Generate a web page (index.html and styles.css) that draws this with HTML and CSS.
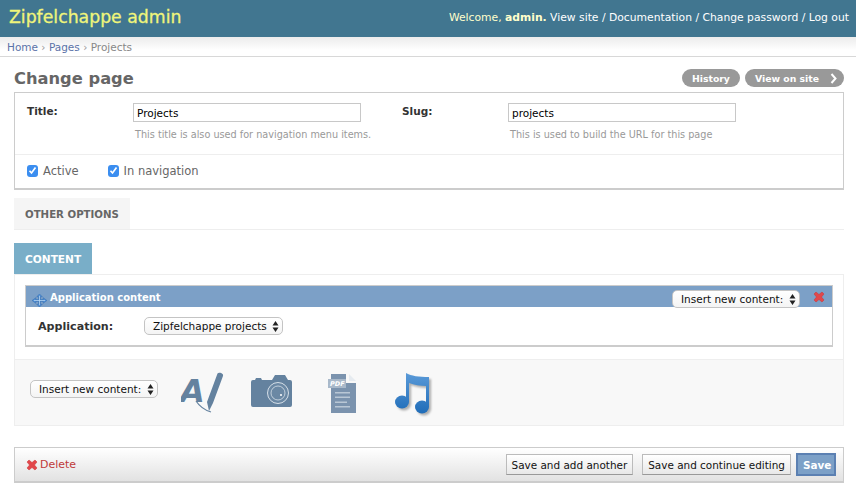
FILE: index.html
```html
<!DOCTYPE html>
<html lang="en">
<head>
  <meta charset="UTF-8">
  <title>Change page | Zipfelchappe admin</title>
  <link rel="stylesheet" href="styles.css">
</head>

<body>

  <header class="topbar">
    <div class="brand">Zipfelchappe admin</div>
    <div class="usertools">
      <span class="welcome">Welcome, <strong>admin.</strong></span>
      <a href="#">View site</a> / <a href="#">Documentation</a> / <a href="#">Change password</a> / <a href="#">Log out</a>
    </div>
  </header>

  <div class="breadcrumbs">
    <a href="#">Home</a> <span class="sep">›</span> <a href="#">Pages</a> <span class="sep">›</span> Projects
  </div>

  <main class="content">
    <div class="title-row">
      <h1>Change page</h1>
      <div class="object-tools">
        <a class="tool" href="#">History</a>
        <a class="tool tool-next" href="#">View on site
          <svg class="chevron" width="7" height="11" viewBox="0 0 7 11"><path d="M1.5 1l4 4.5-4 4.5" fill="none" stroke="#fff" stroke-width="2"/></svg>
        </a>
      </div>
    </div>

    <section class="module">
      <div class="form-row fields">
        <div class="field">
          <label class="field-label">Title:</label>
          <div>
            <input class="text-input" type="text" value="Projects">
            <p class="help">This title is also used for navigation menu items.</p>
          </div>
        </div>
        <div class="field">
          <label class="field-label">Slug:</label>
          <div>
            <input class="text-input" type="text" value="projects">
            <p class="help">This is used to build the URL for this page</p>
          </div>
        </div>
      </div>
      <div class="form-row checks">
        <label class="check">
          <span class="checkbox"><svg width="9" height="9" viewBox="0 0 9 9"><path d="M1.5 4.8l2 2.2 4-5.5" fill="none" stroke="#fff" stroke-width="1.7"/></svg></span>
          Active
        </label>
        <label class="check">
          <span class="checkbox"><svg width="9" height="9" viewBox="0 0 9 9"><path d="M1.5 4.8l2 2.2 4-5.5" fill="none" stroke="#fff" stroke-width="1.7"/></svg></span>
          In navigation
        </label>
      </div>
    </section>

    <div class="tabs tabs-options">
      <a class="tab" href="#">OTHER OPTIONS</a>
    </div>

    <div class="tabs tabs-content">
      <a class="tab tab-active" href="#">CONTENT</a>
    </div>

    <section class="panel">
      <div class="panel-body">
        <div class="item">
          <div class="item-head">
            <svg class="move-icon" width="15" height="13" viewBox="0 0 16 14">
              <path d="M8 0l3 3H9v3h3V4l4 3-4 3V8H9v3h2l-3 3-3-3h2V8H4v2L0 7l4-3v2h3V3H5z" fill="#4f8fd6" stroke="#2f69ad" stroke-width=".5"/>
              <path d="M2 7h12M8 2v10" stroke="#bcd8f2" stroke-width=".8"/>
            </svg>
            <span class="item-title">Application content</span>
            <span class="select select-head">Insert new content:
              <svg class="updown" width="7" height="11" viewBox="0 0 7 11"><path d="M3.500 0l3 4.500H.5zM3.500 11l-3-4.500h6z" fill="#222"/></svg>
            </span>
            <svg class="x-icon x-head" width="12" height="12" viewBox="0 0 12 12"><path d="M3 1l3 2.500L9 1l2 2-2.500 3L11 9l-2 2-3-2.500L3 11 1 9l2.500-3L1 3z" fill="#e2474b" stroke="#c33" stroke-width=".5"/></svg>
          </div>
          <div class="item-row">
            <span class="item-label">Application:</span>
            <span class="select">Zipfelchappe projects
              <svg class="updown" width="7" height="11" viewBox="0 0 7 11"><path d="M3.500 0l3 4.500H.5zM3.500 11l-3-4.500h6z" fill="#222"/></svg>
            </span>
          </div>
        </div>
      </div>

      <div class="insert-bar">
        <span class="select">Insert new content:
          <svg class="updown" width="7" height="11" viewBox="0 0 7 11"><path d="M3.500 0l3 4.500H.5zM3.500 11l-3-4.500h6z" fill="#222"/></svg>
        </span>

        <svg class="tool-icon icon-text" width="44" height="42" viewBox="0 0 44 42">
          <text x="-1" y="30" class="icon-a">A</text>
          <path d="M15 29c4 6 8 9 15 11" fill="none" stroke="#64829f" stroke-width="1.200"/>
          <path d="M36.500 1.500c1-1.200 4-.6 5 .5.800.8.600 1.500.4 2.200L32 31l-4 8-2-9z" fill="#64829f"/>
        </svg>

        <svg class="tool-icon icon-camera" width="41" height="32" viewBox="0 0 41 32">
          <path d="M0 7q0-2 2-2h2l1-2h5l1 2h10l3-5h10l3 5h2q2 0 2 2v23q0 2-2 2H2q-2 0-2-2z" fill="#64829f"/>
          <circle cx="27" cy="18" r="10.500" fill="#6b88a4" stroke="#d5dfe8" stroke-width="1"/>
          <circle cx="27" cy="18" r="7" fill="none" stroke="#d5dfe8" stroke-width=".8"/>
          <circle cx="30" cy="20" r="1" fill="#fff"/>
        </svg>

        <svg class="tool-icon icon-pdf" width="28" height="39" viewBox="0 0 28 39">
          <path d="M3 0h15l10 9v30H3z" fill="#7b93ae"/>
          <path d="M21 0l7 7h-7z" fill="#e6ebf0"/>
          <path d="M18 0h3v7h7v2h-10z" fill="#f8f8f8"/>
          <rect x="0" y="5" width="18" height="9" fill="#a9b9ca"/>
          <text x="2" y="12.300" class="icon-pdf-label">PDF</text>
          <path d="M7 18h15v1.500H7zM7 22.500h15V24H7zM7 27.500h12V29H7zM7 32h15v1.500H7z" fill="#b9c7d5"/>
        </svg>

        <svg class="tool-icon icon-music" width="40" height="44" viewBox="0 0 40 44">
          <defs>
            <linearGradient id="note" gradientUnits="userSpaceOnUse" x1="0" y1="0" x2="0" y2="41">
              <stop offset="0" stop-color="#5a9ad8"/>
              <stop offset="1" stop-color="#1f6cb8"/>
            </linearGradient>
          </defs>
          <g fill="url(#note)">
            <path d="M11 0c5 3 13 4 23 4v30h-3V13c-6 0-12-1-17-3v19h-3z"/>
            <ellipse cx="7" cy="29" rx="7" ry="6.500"/>
            <ellipse cx="27" cy="34" rx="7" ry="6.500"/>
          </g>
        </svg>
      </div>
    </section>

    <div class="submit-row">
      <a class="delete" href="#">
        <svg class="x-icon" width="12" height="12" viewBox="0 0 12 12"><path d="M3 1l3 2.500L9 1l2 2-2.500 3L11 9l-2 2-3-2.500L3 11 1 9l2.500-3L1 3z" fill="#e2474b" stroke="#c33" stroke-width=".5"/></svg>
        Delete
      </a>
      <button class="btn" type="button">Save and add another</button>
      <button class="btn" type="button">Save and continue editing</button>
      <button class="btn btn-default" type="button">Save</button>
    </div>
  </main>

</body>
</html>
```

FILE: styles.css
```css
body {
  font-family: "DejaVu Sans", Verdana, sans-serif;
  font-size: 11px;
  color: #333;
  background: #fff;
  margin: 0;
  padding: 0;
}

a {
  text-decoration: none;
  color: inherit;
}

.topbar {
  display: flex;
  justify-content: space-between;
  align-items: center;
  height: 37px;
  padding: 0 7px 0 9px;
  background-color: #417690;
}

.brand {
  font-size: 17.300px;
  font-weight: 400;
  color: #f0f57a;
  -webkit-text-stroke: 0.3px #f0f57a;
  padding-bottom: 3px;
}

.usertools {
  font-size: 10.770px;
  color: #fff;
  padding-bottom: 2px;
}

.welcome {
  color: #ffffcc;
}

.breadcrumbs {
  height: 19px;
  line-height: 20px;
  padding-left: 7px;
  font-size: 10.500px;
  color: #888;
  background: linear-gradient(#ececec, #fff 70%);
  border-bottom: 1px solid #d8d8d8;
}

.breadcrumbs a {
  color: #5b73a8;
}

.sep {
  color: #999;
}

.content {
  padding: 0 12px 0 14px;
}

.title-row {
  display: flex;
  justify-content: space-between;
  align-items: center;
  height: 35px;
}

h1 {
  margin: 0;
  font-size: 16.300px;
  font-weight: bold;
  color: #666;
  padding-top: 7px;
}

.object-tools {
  display: flex;
  gap: 5px;
  padding-top: 7px;
}

.tool {
  display: flex;
  align-items: center;
  height: 18px;
  padding: 0 10px;
  border-radius: 9px;
  background-color: #999;
  color: #fff;
  font-size: 9.300px;
  font-weight: bold;
}

.tool-next {
  padding-right: 7px;
}

.chevron {
  margin-left: 11px;
}

.module {
  border: 1px solid #ccc;
  border-bottom-width: 2px;
}

.form-row {
  padding: 0 12px;
}

.fields {
  display: flex;
  height: 61px;
  border-bottom: 1px solid #eee;
}

.field {
  display: flex;
  width: 375px;
  padding-top: 10px;
}

.field-label {
  width: 106px;
  font-size: 10.500px;
  font-weight: bold;
  color: #333;
  padding-top: 2px;
}

.text-input {
  display: block;
  box-sizing: border-box;
  width: 228px;
  height: 19px;
  margin: 0;
  padding: 0 3px;
  border: 1px solid #c8c8c8;
  font-family: inherit;
  font-size: 10.500px;
  color: #000;
}

.help {
  margin: 7px 0 0 2px;
  font-size: 9.700px;
  color: #999;
}

.checks {
  display: flex;
  align-items: center;
  gap: 29px;
  box-sizing: border-box;
  height: 33px;
  padding-bottom: 2px;
}

.check {
  display: flex;
  align-items: center;
  gap: 5px;
  color: #666;
  font-size: 11.500px;
}

.checkbox {
  display: flex;
  align-items: center;
  justify-content: center;
  width: 11px;
  height: 12px;
  border-radius: 3px;
  background-color: #3b8ef0;
}

.tabs {
  display: flex;
  border-bottom: 1px solid #eee;
}

.tabs-options {
  margin-top: 8px;
  height: 31px;
}

.tabs-content {
  margin-top: 13px;
  height: 31px;
}

.tab {
  display: flex;
  align-items: center;
  padding: 2px 11px 0;
  font-weight: bold;
  font-size: 10.200px;
  color: #666;
  background-color: #f5f5f5;
}

.tab-active {
  padding-top: 0;
  font-size: 10.600px;
  color: #fff;
  background-color: #79aec8;
}

.panel {
  border: 1px solid #eee;
  border-top: none;
}

.panel-body {
  padding: 10px 10px 12px 10px;
  height: 62px;
}

.item {
  border: 1px solid #ccc;
  border-bottom-width: 2px;
  border-top-width: 1px;
  height: 59px;
}

.item-head {
  display: flex;
  align-items: center;
  height: 21px;
  background-color: #7ca0c7;
  color: #fff;
}

.move-icon {
  align-self: flex-end;
  margin-left: 6px;
}

.item-title {
  margin-left: 3px;
  padding-top: 1px;
  font-weight: bold;
  font-size: 10px;
}

.select {
  display: inline-flex;
  align-items: center;
  justify-content: space-between;
  box-sizing: border-box;
  height: 18px;
  padding: 0 3px 0 8px;
  border: 1px solid #c4c4c4;
  border-radius: 5px;
  background: linear-gradient(#fff, #f4f4f4);
  color: #111;
  font-size: 10.500px;
  white-space: nowrap;
}

.updown {
  margin-left: 5px;
}

.select-head {
  align-self: flex-end;
  margin-left: auto;
  margin-bottom: -1px;
  width: 128px;
}

.x-head {
  margin: 0 7px 0 13px;
}

.item-row {
  display: flex;
  align-items: center;
  height: 38px;
  padding-left: 12px;
}

.item-label {
  width: 106px;
  font-weight: bold;
  font-size: 11.100px;
}

.insert-bar {
  display: flex;
  align-items: flex-start;
  box-sizing: border-box;
  height: 66px;
  padding-left: 15px;
  background-color: #f8f8f8;
  border-top: 1px solid #eee;
}

.insert-bar .select {
  width: 128px;
  margin-top: 20px;
}

.tool-icon {
  flex: none;
}

.icon-text {
  margin: 12px 0 0 23px;
}

.icon-camera {
  margin: 15px 0 0 26px;
}

.icon-pdf {
  margin: 14px 0 0 36px;
}

.icon-music {
  margin: 13px 0 0 39px;
  filter: drop-shadow(2px 2px 1px rgba(0, 0, 0, 0.3));
}

.icon-a {
  font-family: "DejaVu Sans", sans-serif;
  font-size: 32px;
  font-weight: bold;
  font-style: italic;
  fill: #64829f;
}

.icon-pdf-label {
  font-family: "DejaVu Sans", sans-serif;
  font-size: 6.500px;
  font-weight: bold;
  font-style: italic;
  fill: #fff;
}

.submit-row {
  display: flex;
  align-items: center;
  gap: 9px;
  box-sizing: border-box;
  height: 36px;
  margin-top: 21px;
  padding: 0 7px 0 11px;
  border: 1px solid #ccc;
  border-bottom-width: 2px;
  background: linear-gradient(#fff, #e2e2e2);
}

.delete {
  display: flex;
  align-items: center;
  gap: 2px;
  margin-right: auto;
  color: #c03a3a;
  font-size: 11px;
}

.btn {
  height: 21px;
  padding: 0 5px;
  border: 1px solid #bbb;
  border-bottom-color: #999;
  background: linear-gradient(#fff, #e8e8e8);
  font-family: inherit;
  font-size: 10.450px;
  color: #111;
}

.btn-default {
  margin-left: -4px;
  width: 40px;
  height: 23px;
  border: 2px solid #5b80b2;
  background: #7ca0c7;
  color: #fff;
  font-weight: bold;
}
```
